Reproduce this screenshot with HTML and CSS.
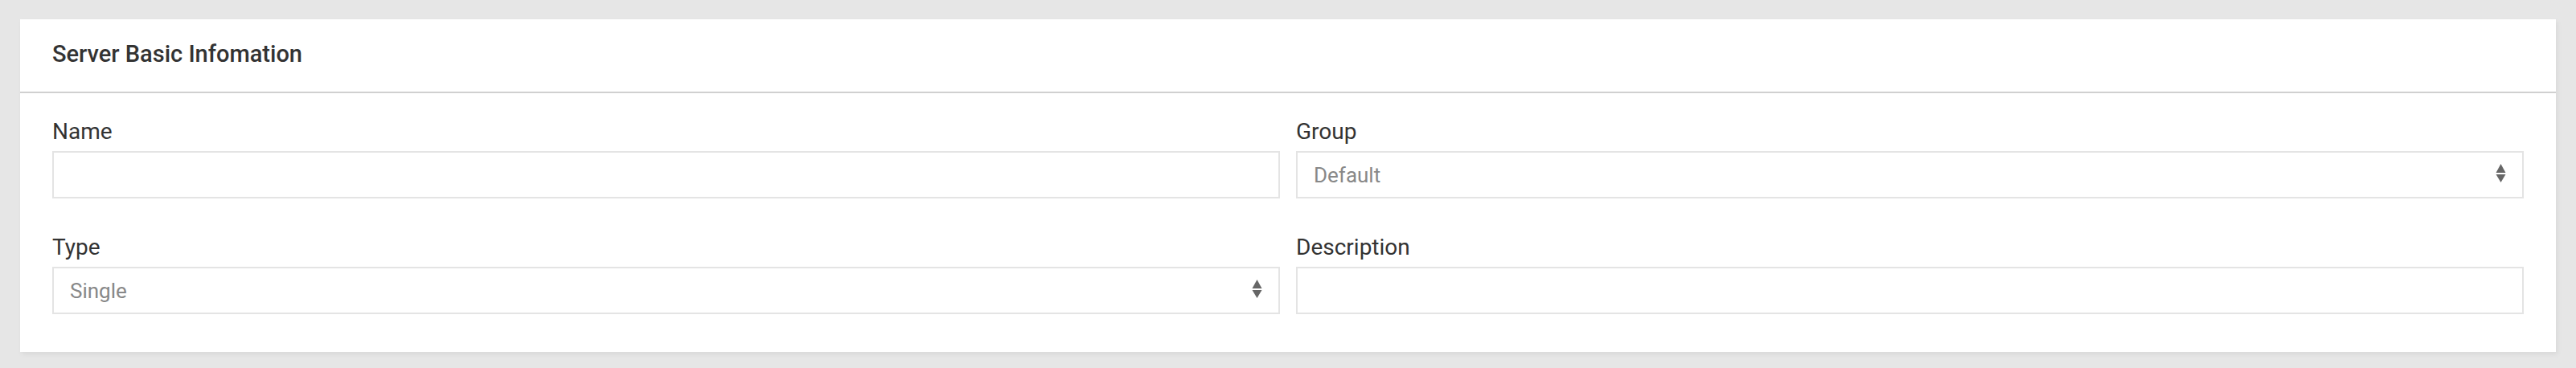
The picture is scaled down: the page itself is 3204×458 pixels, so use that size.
FILE: index.html
```html
<!DOCTYPE html>
<html lang="en">
<head>
<meta charset="utf-8">
<title>Server Basic Infomation</title>
<link rel="stylesheet" href="styles.css">
</head>
<body>
<section class="card">
  <header class="card-header">
    <h2 class="card-title">Server Basic Infomation</h2>
  </header>
  <div class="card-body">
    <div class="form-grid">
      <div class="field">
        <label class="field-label">Name</label>
        <div class="control"></div>
      </div>
      <div class="field">
        <label class="field-label">Group</label>
        <div class="control select">
          <span class="value">Default</span>
          <svg class="arrows" width="13" height="24" viewBox="0 0 13 24"><polygon points="6.5,0 12.5,11 0.5,11" fill="#666"/><polygon points="0.5,13 12.5,13 6.5,23" fill="#666"/></svg>
        </div>
      </div>
      <div class="field">
        <label class="field-label">Type</label>
        <div class="control select">
          <span class="value">Single</span>
          <svg class="arrows" width="13" height="24" viewBox="0 0 13 24"><polygon points="6.5,0 12.5,11 0.5,11" fill="#666"/><polygon points="0.5,13 12.5,13 6.5,23" fill="#666"/></svg>
        </div>
      </div>
      <div class="field">
        <label class="field-label">Description</label>
        <div class="control"></div>
      </div>
    </div>
  </div>
</section>
</body>
</html>
```
FILE: styles.css
```css
html, body {
  margin: 0;
  padding: 0;
}
body {
  background: #e6e6e6;
  padding: 24px 25px 20px;
  font-family: Roboto, "Liberation Sans", Arial, sans-serif;
  color: #333;
}
.card {
  background: #fff;
  box-shadow: 2px 3px 6px rgba(0, 0, 0, 0.06);
}
.card-header {
  border-bottom: 2px solid #d0d0d0;
  display: flex;
  align-items: center;
  padding: 0 40px;
  box-sizing: border-box;
  height: 92px;
}
.card-title {
  margin: 0;
  font-size: 29px;
  font-weight: 500;
  color: #333;
  line-height: 35px;
  position: relative;
  top: -2px;
}
.card-body {
  padding: 31px 40px 47px;
}
.form-grid {
  display: grid;
  grid-template-columns: 1fr 1fr;
  column-gap: 20px;
  row-gap: 44px;
}
.field-label {
  display: block;
  font-size: 28px;
  line-height: 34px;
  color: #333;
  margin-bottom: 7px;
}
.control {
  height: 59px;
  box-sizing: border-box;
  border: 2px solid #e4e4e4;
  background: #fff;
  display: flex;
  align-items: center;
  padding: 0 20px;
}
.select .value {
  flex: 1;
  font-size: 26px;
  color: #888;
}
.arrows {
  display: block;
  margin-top: -3px;
}
```
